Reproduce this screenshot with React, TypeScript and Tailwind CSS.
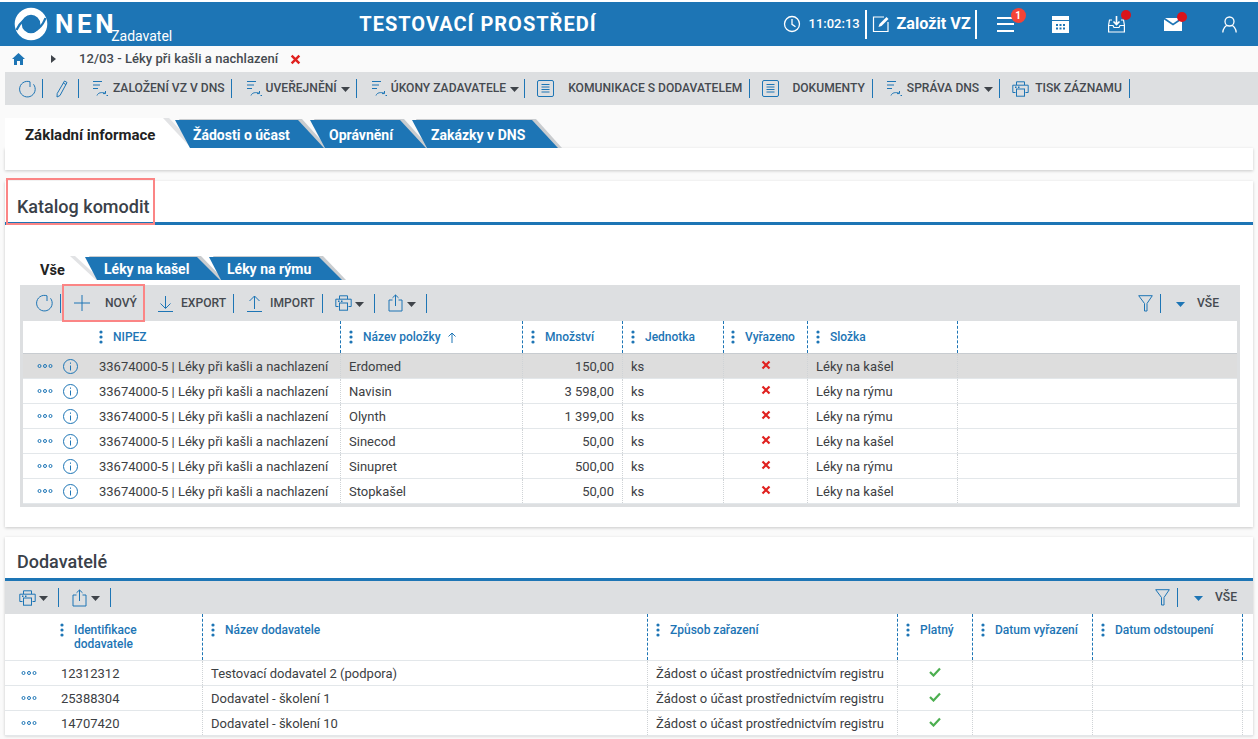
import React from "react";

const B = "#1d75b5";
const Sep = ({ c = "h-[19px]" }: { c?: string }) => <span className={`block w-px bg-[#1d75b5] ${c} shrink-0`} />;
const Caret = ({ c = "#3f444a" }: { c?: string }) => (
  <svg width="9" height="5" viewBox="0 0 9 5" className="block shrink-0 mt-[2px]"><path d="M0 0h9L4.5 5z" fill={c} /></svg>
);
const Refresh = () => (
  <svg width="17" height="18" viewBox="0 0 17 18" fill="none" stroke={B} strokeWidth="1" className="block shrink-0">
    <path d="M11 7V1.800A7.800 7.800 0 1 0 14.500 4.300" />
  </svg>
);
const Pencil = () => (
  <svg width="12" height="18" viewBox="0 0 12 18" fill="none" stroke={B} strokeWidth="1" className="block shrink-0">
    <path d="M8.500 1 11 2.500 4 15.500 1 17 1.200 13.500z" /><path d="M7.300 3 10 4.600" />
  </svg>
);
const Flow = () => (
  <svg width="15" height="17" viewBox="0 0 15 17" fill="none" stroke={B} strokeWidth="1" className="block shrink-0">
    <path d="M0 1.500h9M0 5h7M0 8.500h5" />
    <path d="M4 15.500c1-3 5-3.500 8-2.300M12.500 11v2.600H10M15 15.500h-1.500" />
  </svg>
);
const Doc = () => (
  <svg width="17" height="17" viewBox="0 0 17 17" fill="none" stroke={B} strokeWidth="1" className="block shrink-0">
    <rect x=".5" y=".5" width="16" height="16" rx="1.500" /><path d="M4.500 4.500h8M4.500 7h8M4.500 9.500h8M4.500 12h8" />
  </svg>
);
const Printer = () => (
  <svg width="17" height="16" viewBox="0 0 17 16" fill="none" stroke={B} strokeWidth="1" className="block shrink-0">
    <path d="M4.500 4V.8h8V4M3.500 11.500H.8V4.200h15.400v7.300h-2.700" /><rect x="4.500" y="8" width="8" height="7.200" />
    <path d="M3 6.200h1.500M6 6.200h1.500" strokeWidth="1.400" />
  </svg>
);
const Share = () => (
  <svg width="15" height="18" viewBox="0 0 15 18" fill="none" stroke={B} strokeWidth="1" className="block shrink-0">
    <path d="M4.500 6H1v11h13V6h-3.500M7.500 12V1M4.500 3.800 7.500 1l3 2.800" />
  </svg>
);
const Filter = () => (
  <svg width="15" height="17" viewBox="0 0 15 17" fill="none" stroke={B} strokeWidth="1" className="block shrink-0">
    <path d="M.7.700h13.600L9 8.500v7.500H6.500V8.500z" />
  </svg>
);
const Dots = () => (
  <svg width="16" height="4" viewBox="0 0 16 4" fill="none" stroke={B} strokeWidth="1" className="block shrink-0">
    <circle cx="2.500" cy="2" r="1.500" /><circle cx="8" cy="2" r="1.500" /><circle cx="13.500" cy="2" r="1.500" />
  </svg>
);
const Info = () => (
  <svg width="15" height="15" viewBox="0 0 15 15" fill="none" stroke={B} strokeWidth="1" className="block shrink-0">
    <circle cx="7.500" cy="7.500" r="7" /><path d="M7.500 6.500V11.500" /><path d="M7.500 3.500v1.300" />
  </svg>
);
const Kebab = () => (
  <svg width="4" height="14" viewBox="0 0 4 14" className="block shrink-0"><g fill={B}><circle cx="2" cy="2" r="1.600" /><circle cx="2" cy="7" r="1.600" /><circle cx="2" cy="12" r="1.600" /></g></svg>
);
const XMark = ({ c = "w-[10px] h-[10px]" }: { c?: string }) => (
  <svg viewBox="0 0 10 10" className={`block ${c}`}><path d="M1.500 1.500l7 7M8.500 1.500l-7 7" stroke="#e0211f" strokeWidth="2.200" /></svg>
);
const Check = () => (
  <svg width="12" height="10" viewBox="0 0 12 10" fill="none" className="block"><path d="M1 5l3.500 3.500L11 1.500" stroke="#4caf50" strokeWidth="2.200" /></svg>
);
const Lbl = ({ t, c = "ml-[4px]" }: { t: string; c?: string }) => (
  <span className={`${c} text-[12.100px] font-medium text-[#454a50] whitespace-nowrap`}>{t}</span>
);

type TabProps = { t: string; step: string; w: string; pl: string; clip: string };
const Tab = ({ t, step, w, pl, clip }: TabProps) => (
  <div className={`${step} h-full relative shrink-0`}>
    <div className={`absolute left-[4px] -top-[1px] bottom-0 ${w} bg-[#c9cccf] ${clip}`} />
    <div className={`absolute left-0 top-0 bottom-0 ${w} bg-[#1d75b5] ${clip} ${pl} pt-[2px] flex items-center text-[14px] font-bold text-white whitespace-nowrap`}>
      {t}
    </div>
  </div>
);

const rows = [
  ["Erdomed", "150,00", "Léky na kašel"],
  ["Navisin", "3 598,00", "Léky na rýmu"],
  ["Olynth", "1 399,00", "Léky na rýmu"],
  ["Sinecod", "50,00", "Léky na kašel"],
  ["Sinupret", "500,00", "Léky na rýmu"],
  ["Stopkašel", "50,00", "Léky na kašel"],
];
const sup = [
  ["12312312", "Testovací dodavatel 2 (podpora)"],
  ["25388304", "Dodavatel - školení 1"],
  ["14707420", "Dodavatel - školení 10"],
];

const HCell = ({ children, c = "" }: { children: React.ReactNode; c?: string }) => (
  <div className={`border-r border-dashed border-[#1d75b5] flex items-start gap-[10px] pl-[8px] pt-[9px] text-[12px] font-medium text-[#1d75b5] leading-[14px] ${c}`}>
    <Kebab />
    <span className="flex items-center">{children}</span>
  </div>
);
const BCell = ({ children, c = "" }: { children?: React.ReactNode; c?: string }) => (
  <div className={`border-r border-dotted border-[#cfd3d6] h-full flex items-center text-[13px] text-[#3c4043] whitespace-nowrap pt-[1px] ${c}`}>
    {children}
  </div>
);

export default function App() {
  const catCols = "grid grid-cols-[68px_250px_182px_100px_101px_84px_150px_1fr]";
  const supCols = "grid grid-cols-[48px_150px_445px_250px_75px_120px_150px_1fr]";
  const clipMain = "[clip-path:polygon(0_0,calc(100%-26px)_0,100%_100%,15px_100%)]";
  const clipSub = "[clip-path:polygon(0_0,calc(100%-23px)_0,100%_100%,12px_100%)]";
  return (
    <div className="w-[1258px] h-[739px] overflow-hidden relative bg-[#fafafa] text-[#3c4043] font-['Roboto',sans-serif]">
      <div className="h-[2px] bg-white" />
      {/* header */}
      <header className="h-[44px] bg-[#1d75b5] flex items-center text-white">
        <svg width="34" height="34" viewBox="0 0 34 34" className="ml-[14px] shrink-0">
          <circle cx="17" cy="17" r="12.800" fill="none" stroke="#fff" strokeWidth="7" />
          <path d="M2.500 23c4-9 11-13.500 15.500-14M31.500 11c-3 9-10 13.500-15.500 14" fill="none" stroke="#1d75b5" strokeWidth="2.200" />
        </svg>
        <span className="ml-[7px] text-[26px] font-bold tracking-[3.600px] leading-none">NEN</span>
        <span className="-ml-[6px] mt-[23px] text-[14px] leading-none">Zadavatel</span>
        <span className="ml-[187px] text-[20px] font-bold tracking-[1px] whitespace-nowrap">TESTOVACÍ PROSTŘEDÍ</span>
        <svg width="18" height="18" viewBox="0 0 18 18" fill="none" stroke="#fff" strokeWidth="1.300" className="ml-[186px] shrink-0">
          <circle cx="9" cy="9" r="7.500" /><path d="M9 4v5.300l3.500 2.500" />
        </svg>
        <span className="ml-[8px] text-[13px] font-medium w-[50px] whitespace-nowrap">11:02:13</span>
        <span className="ml-[6px] w-[2px] h-[29px] bg-white shrink-0" />
        <svg width="18" height="18" viewBox="0 0 18 18" fill="none" stroke="#fff" strokeWidth="1.200" className="ml-[5px] shrink-0">
          <path d="M12 2H1.500v14.500H16V7" /><path d="M6.500 12l1-3 7-7 2 2-7 7z" fill="#fff" stroke="none" />
        </svg>
        <span className="ml-[7px] text-[16.200px] font-bold whitespace-nowrap">Založit VZ</span>
        <span className="ml-[4px] w-[2px] h-[29px] bg-white shrink-0" />
        <div className="relative ml-[20px] w-[17px] shrink-0">
          <div className="h-[2px] bg-white" /><div className="h-[2px] bg-white mt-[4.500px]" /><div className="h-[2px] bg-white mt-[4.500px]" />
          <span className="absolute -top-[9px] left-[14px] w-[15px] h-[15px] rounded-full bg-[#f44336] text-[10px] font-bold flex items-center justify-center">1</span>
        </div>
        <svg width="17" height="17" viewBox="0 0 17 17" className="ml-[38px] shrink-0">
          <path fill="#fff" fillRule="evenodd" d="M0 0h17v17H0zM0 4v1h17V4zM4 8v2h2V8zM7.500 8v2h2V8zM11 8v2h2V8zM4 11.500v2h2v-2zM7.500 11.500v2h2v-2zM11 11.500v2h2v-2z" />
        </svg>
        <div className="relative ml-[39px] shrink-0 w-[17px] h-[18px]">
          <svg width="17" height="18" viewBox="0 0 17 18" fill="none" stroke="#fff" strokeWidth="1.200" className="block">
            <path d="M4 5H1.500L.6 10v7h15.800v-7l-.9-5H13M.6 10.500H5l1 2h5l1-2h4.400" /><path d="M8.500 1v8M5.500 6.500l3 3 3-3" strokeWidth="1.600" />
          </svg>
          <span className="absolute -top-[5px] left-[13px] w-[10px] h-[10px] rounded-full bg-[#d9141b]" />
        </div>
        <div className="relative ml-[39px] shrink-0 w-[18px] h-[13px] mt-[1px]">
          <svg width="18" height="13" viewBox="0 0 18 13" className="block"><path fill="#fff" d="M0 1.500l9 6L18 1.500V13H0z" /><path fill="#fff" d="M1 0h16L9 5.500z" /></svg>
          <span className="absolute -top-[6px] left-[13px] w-[10px] h-[10px] rounded-full bg-[#d9141b]" />
        </div>
        <svg width="15" height="17" viewBox="0 0 15 17" fill="none" stroke="#fff" strokeWidth="1.300" className="ml-[40px] shrink-0">
          <circle cx="7.500" cy="5.500" r="4.500" /><path d="M.8 16.500c.3-4.500 3-6.800 4.500-7.200M14.200 16.500c-.3-4.500-3-6.800-4.500-7.200" />
        </svg>
      </header>
      {/* breadcrumb */}
      <div className="h-[26px] flex items-center text-[13px] font-medium text-[#454a50]">
        <svg width="13" height="12" viewBox="0 0 13 12" className="ml-[12px] shrink-0"><path fill={B} d="M6.500 0 13 6h-2v6H8V8H5v4H2V6H0z" /></svg>
        <svg width="5" height="8" viewBox="0 0 5 8" className="ml-[26px] shrink-0"><path fill="#3f444a" d="M0 0l5 4-5 4z" /></svg>
        <span className="ml-[23px] tracking-[0.05px]">12/03 - Léky při kašli a nachlazení</span>
        <span className="ml-[12px]"><XMark c="w-[11px] h-[11px]" /></span>
      </div>
      {/* toolbar */}
      <div className="ml-[5px] h-[33px] bg-[#dddfe1] flex items-center pl-[14px]">
        <Refresh />
        <span className="ml-[6px]"><Sep /></span>
        <span className="ml-[13px]"><Pencil /></span>
        <span className="ml-[10px]"><Sep /></span>
        <span className="ml-[14px]"><Flow /></span>
        <Lbl t="ZALOŽENÍ VZ V DNS" c="ml-[5px]" />
        <span className="ml-[6px]"><Sep /></span>
        <span className="ml-[15px]"><Flow /></span>
        <Lbl t="UVEŘEJNĚNÍ" />
        <span className="ml-[4px]"><Caret /></span>
        <span className="ml-[6px]"><Sep /></span>
        <span className="ml-[15px]"><Flow /></span>
        <Lbl t="ÚKONY ZADAVATELE" />
        <span className="ml-[4px]"><Caret /></span>
        <span className="ml-[5px]"><Sep /></span>
        <span className="ml-[12px]"><Doc /></span>
        <Lbl t="KOMUNIKACE S DODAVATELEM" c="ml-[14px]" />
        <span className="ml-[7px]"><Sep /></span>
        <span className="ml-[12px]"><Doc /></span>
        <Lbl t="DOKUMENTY" c="ml-[13px]" />
        <span className="ml-[7px]"><Sep /></span>
        <span className="ml-[14px]"><Flow /></span>
        <Lbl t="SPRÁVA DNS" c="ml-[5px]" />
        <span className="ml-[5px]"><Caret /></span>
        <span className="ml-[6px]"><Sep /></span>
        <span className="ml-[12px]"><Printer /></span>
        <Lbl t="TISK ZÁZNAMU" c="ml-[6px]" />
        <span className="ml-[7px]"><Sep /></span>
      </div>
      {/* main tabs */}
      <div className="mt-[13px] ml-[5px] h-[30px] flex items-end">
        <div className="relative w-[170px] h-[30px] shrink-0">
          <div className="absolute left-[6px] top-0 bottom-0 w-[186px] bg-[#e2e3e5] [clip-path:polygon(0_0,158px_0,100%_100%,0_100%)]" />
          <div className="absolute left-0 top-0 bottom-0 w-[186px] bg-white [clip-path:polygon(0_0,158px_0,100%_100%,0_100%)] pl-[20px] pt-[6px] text-[15px] font-bold text-[#222] whitespace-nowrap">Základní informace</div>
        </div>
        <div className="flex h-[28px]">
          <Tab t="Žádosti o účast" step="w-[135px]" w="w-[149px]" pl="pl-[18px]" clip={clipMain} />
          <Tab t="Oprávnění" step="w-[102px]" w="w-[116px]" pl="pl-[19px]" clip={clipMain} />
          <Tab t="Zakázky v DNS" step="w-[146px]" w="w-[146px]" pl="pl-[19px]" clip={clipMain} />
        </div>
      </div>
      <div className="ml-[5px] mr-[5px] h-[22px] bg-white shadow-[0_1px_3px_rgba(0,0,0,0.2)]" />
      {/* Katalog */}
      <section className="mt-[11px] ml-[5px] mr-[5px] h-[346px] bg-white shadow-[0_1px_3px_rgba(0,0,0,0.2)]">
        <div className="h-[44px] border-b-[3px] border-[#1d75b5] pl-[12px] pt-[13px] text-[18px] leading-[25px] font-medium text-[#3a4149]">Katalog komodit</div>
        <div className="ml-[19px] mt-[31px] h-[24px] flex items-end">
          <div className="relative w-[61px] h-[24px] shrink-0">
            <div className="absolute left-[5px] top-0 bottom-0 w-[72px] bg-[#e2e3e5] [clip-path:polygon(0_0,46px_0,100%_100%,0_100%)]" />
            <div className="absolute left-0 top-0 bottom-0 w-[72px] bg-white [clip-path:polygon(0_0,46px_0,100%_100%,0_100%)] pl-[16px] pt-[4px] text-[14.500px] font-bold text-[#222]">Vše</div>
          </div>
          <div className="flex h-[23px]">
            <Tab t="Léky na kašel" step="w-[124px]" w="w-[135px]" pl="pl-[19px]" clip={clipSub} />
            <Tab t="Léky na rýmu" step="w-[133px]" w="w-[133px]" pl="pl-[18px]" clip={clipSub} />
          </div>
        </div>
        <div className="ml-[15px] mr-[13px] mt-[5px] pb-[3px] px-[3px] bg-[#dddfe1]">
          <div className="h-[36px] -mx-[3px] flex items-center pl-[16px] pr-[21px]">
            <Refresh />
            <span className="ml-[7px]"><Sep /></span>
            <svg width="16" height="16" viewBox="0 0 16 16" stroke={B} strokeWidth="1" className="ml-[13px] shrink-0"><path d="M8 0v16M0 8h16" /></svg>
            <Lbl t="NOVÝ" c="ml-[15px]" />
            <span className="ml-[7px]"><Sep /></span>
            <svg width="15" height="17" viewBox="0 0 15 17" fill="none" stroke={B} strokeWidth="1" className="ml-[13px] shrink-0"><path d="M7.500 1v12M2.500 8.500l5 5 5-5M0 16.500h15" /></svg>
            <Lbl t="EXPORT" c="ml-[8px]" />
            <span className="ml-[7px]"><Sep /></span>
            <svg width="15" height="17" viewBox="0 0 15 17" fill="none" stroke={B} strokeWidth="1" className="ml-[13px] shrink-0"><path d="M7.500 14V1M2.500 6l5-5 5 5M0 16.500h15" /></svg>
            <Lbl t="IMPORT" c="ml-[8px]" />
            <span className="ml-[7px]"><Sep /></span>
            <span className="ml-[12px]"><Printer /></span>
            <span className="ml-[3px]"><Caret /></span>
            <span className="ml-[10px]"><Sep /></span>
            <span className="ml-[13px]"><Share /></span>
            <span className="ml-[4px]"><Caret /></span>
            <span className="ml-[10px]"><Sep /></span>
            <span className="ml-auto"><Filter /></span>
            <span className="ml-[7px]"><Sep /></span>
            <span className="ml-[15px]"><Caret c={B} /></span>
            <Lbl t="VŠE" c="ml-[12px]" />
          </div>
          <div className={`${catCols} h-[33px] bg-white border-b border-[#c8ccd0]`}>
            <div />
            <HCell>NIPEZ</HCell>
            <HCell>
              Název položky
              <svg width="10" height="11" viewBox="0 0 10 11" fill="none" stroke={B} strokeWidth="1" className="ml-[6px]"><path d="M5 11V1M1.500 4.500 5 1l3.500 3.500" /></svg>
            </HCell>
            <HCell>Množství</HCell>
            <HCell>Jednotka</HCell>
            <HCell c="!pl-[7px]">Vyřazeno</HCell>
            <HCell>Složka</HCell>
            <div />
          </div>
          {rows.map((r, i) => (
            <div key={r[0]} className={`${catCols} h-[25px] border-b border-[#e3e7ea] ${i === 0 ? "bg-[#dddddd]" : "bg-white"}`}>
              <div className="flex items-center pl-[14px] gap-[10px] h-full"><Dots /><Info /></div>
              <BCell c="pl-[8px]">33674000-5 | Léky při kašli a nachlazení</BCell>
              <BCell c="pl-[8px]">{r[0]}</BCell>
              <BCell c="justify-end pr-[8px]">{r[1]}</BCell>
              <BCell c="pl-[8px]">ks</BCell>
              <BCell c="justify-center"><span className="-mt-[3px]"><XMark /></span></BCell>
              <BCell c="pl-[8px]">{r[2]}</BCell>
              <div />
            </div>
          ))}
        </div>
      </section>
      {/* Dodavatelé */}
      <section className="mt-[10px] ml-[5px] mr-[5px] h-[198px] bg-white shadow-[0_1px_3px_rgba(0,0,0,0.2)]">
        <div className="h-[44px] border-b-[3px] border-[#1d75b5] pl-[12px] pt-[12px] text-[18px] leading-[25px] font-medium text-[#3a4149]">Dodavatelé</div>
        <div className="h-[33px] bg-[#dddfe1] flex items-center pl-[14px] pr-[16px]">
          <Printer />
          <span className="ml-[3px]"><Caret /></span>
          <span className="ml-[10px]"><Sep /></span>
          <span className="ml-[13px]"><Share /></span>
          <span className="ml-[4px]"><Caret /></span>
          <span className="ml-[10px]"><Sep /></span>
          <span className="ml-auto"><Filter /></span>
          <span className="ml-[7px]"><Sep /></span>
          <span className="ml-[16px]"><Caret c={B} /></span>
          <Lbl t="VŠE" c="ml-[12px]" />
        </div>
        <div className={`${supCols} h-[47px] border-b border-[#e3e7ea]`}>
          <div />
          <HCell c="!pl-[7px]"><span>Identifikace<br />dodavatele</span></HCell>
          <HCell>Název dodavatele</HCell>
          <HCell>Způsob zařazení</HCell>
          <HCell>Platný</HCell>
          <HCell>Datum vyřazení</HCell>
          <HCell>Datum odstoupení</HCell>
          <div />
        </div>
        {sup.map((r) => (
          <div key={r[0]} className={`${supCols} h-[25px] border-b border-[#e3e7ea] bg-white`}>
            <div className="flex items-center pl-[16px] h-full"><Dots /></div>
            <BCell c="pl-[8px]">{r[0]}</BCell>
            <BCell c="pl-[8px]">{r[1]}</BCell>
            <BCell c="pl-[8px]">Žádost o účast prostřednictvím registru</BCell>
            <BCell c="justify-center"><span className="-mt-[3px]"><Check /></span></BCell>
            <BCell />
            <BCell />
            <div />
          </div>
        ))}
      </section>
      {/* red annotation boxes */}
      <div className="absolute left-[6px] top-[178px] w-[149px] h-[47px] border-2 border-[#fb8585]" />
      <div className="absolute left-[62px] top-[284px] w-[83px] h-[38px] border-2 border-[#fb8585]" />
    </div>
  );
}
